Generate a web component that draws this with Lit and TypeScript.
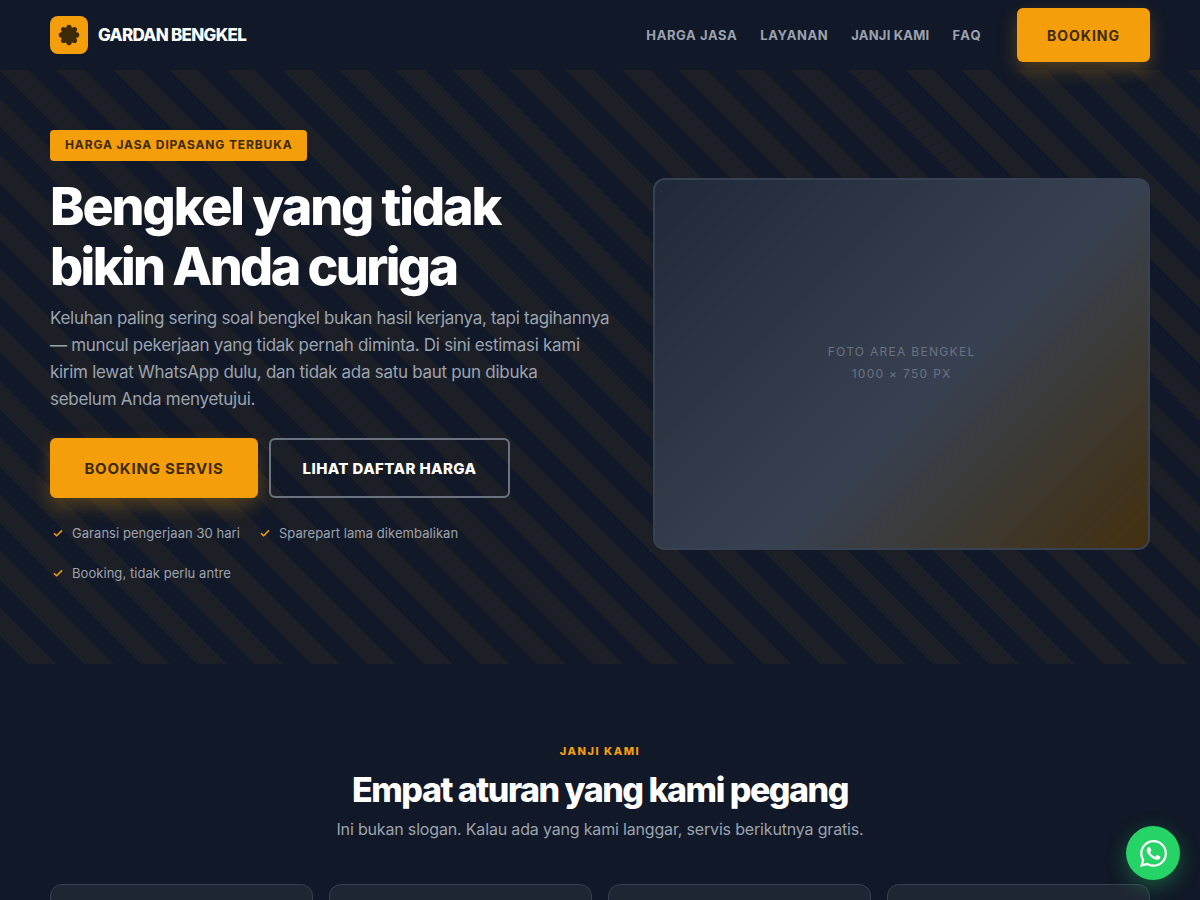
import { LitElement, html, svg, css } from "lit";
import { customElement } from "lit/decorators.js";

@customElement("app-root")
export class AppRoot extends LitElement {
  static styles = css`
    :host { display: block; background: #111827; font-family: "Inter", "Noto Sans", sans-serif; height: 900px; overflow: hidden; position: relative; color: #fff; }
    * { box-sizing: border-box; }
    header { height: 70px; padding: 0 50px; display: flex; align-items: center; justify-content: space-between; background: #111827; position: relative; z-index: 2; }
    .brand { display: flex; align-items: center; gap: 10px; font-weight: 800; font-size: 17px; letter-spacing: -0.7px; }
    .logo { width: 38px; height: 38px; border-radius: 8px; background: #f59e0b; display: flex; align-items: center; justify-content: center; }
    nav { display: flex; align-items: center; gap: 23px; }
    nav a { font-size: 13px; font-weight: 700; letter-spacing: 0.6px; color: #9ca3af; }
    nav a.tight { letter-spacing: 0.2px; }
    nav a.wide { letter-spacing: 1.3px; }
    .btn { display: flex; align-items: center; justify-content: center; border-radius: 6px; font-weight: 700; letter-spacing: 0.8px; }
    .amber { background: #f59e0b; color: #3d2a06; box-shadow: 0 8px 18px rgba(245,158,11,.28); }
    .nav-btn { width: 133px; height: 54px; font-size: 14px; letter-spacing: 1px; margin-left: 12px; }
    .hero { height: 594px; padding: 60px 50px 66px; display: grid; grid-template-columns: 1.15fr 1fr; gap: 32px; align-items: center;
      background: repeating-linear-gradient(45deg, transparent, transparent 20px, rgba(245,158,11,.05) 20px, rgba(245,158,11,.05) 40px); }
    .badge { display: inline-block; background: #f59e0b; color: #3d2a06; font-size: 12px; font-weight: 700; letter-spacing: 0.87px; height: 31px; line-height: 30px; padding: 0 15px; border-radius: 4px; vertical-align: top; }
    h1 { margin: 16px 0 0; font-size: 52px; line-height: 60px; font-weight: 800; }
    h1 span { display: block; }
    .l1 { letter-spacing: -2.1px; }
    .l2 { letter-spacing: -2.6px; }
    .lead { margin: 8px 0 0; font-size: 17px; line-height: 27px; color: #9ca3af; letter-spacing: -0.29px; }
    .cta { display: flex; gap: 11px; margin-top: 25px; }
    .cta .btn { height: 60px; font-size: 15px; }
    .primary { width: 208px; }
    .ghost { width: 241px; border: 2px solid #6b7280; color: #fff; font-weight: 800; letter-spacing: 0.4px !important; }
    .checks { display: flex; flex-wrap: wrap; gap: 16px 17px; margin: 23px 0 13px; max-width: 480px; }
    .check { display: flex; align-items: center; gap: 9px; height: 24px; padding-left: 3px; font-size: 13px; color: #9ca3af; letter-spacing: 0.05px; }
    .photo { aspect-ratio: 4 / 3; border-radius: 12px; border: 2px solid #374151; display: flex; flex-direction: column; align-items: center; justify-content: center; gap: 4px; padding-bottom: 2px;
      background: linear-gradient(135deg, #1f2937 0%, #374151 56%, #43300f 100%); color: #6b7280; font-size: 12px; letter-spacing: 1.3px; line-height: 18px; }
    .section { padding: 80px 50px 0; text-align: center; }
    .eyebrow { font-size: 11px; font-weight: 800; letter-spacing: 1.5px; color: #f59e0b; line-height: 14px; }
    h2 { margin: 10px 0 0; font-size: 34px; line-height: 44px; font-weight: 800; letter-spacing: -1.5px; }
    .sub { margin: 4px 0 0; font-size: 16px; line-height: 26px; color: #9ca3af; letter-spacing: -0.17px; }
    .cards { display: grid; grid-template-columns: repeat(4, 1fr); gap: 16px; margin-top: 42px; }
    .card { height: 120px; background: #1f2633; border: 1px solid #374151; border-radius: 12px; }
    .wa { position: absolute; right: 20px; bottom: 20px; width: 54px; height: 54px; border-radius: 50%; background: #25d366; display: flex; align-items: center; justify-content: center; box-shadow: 0 6px 20px rgba(37,211,102,.35); }
  `;

  render() {
    const lobes = [0, 45, 90, 135, 180, 225, 270, 315].map(
      (a) => svg`<circle cx="${12 + 8.3 * Math.cos((a * Math.PI) / 180)}" cy="${12 + 8.3 * Math.sin((a * Math.PI) / 180)}" r="2.9"/>`
    );
    const gear = html`<svg width="22" height="22" viewBox="0 0 24 24" fill="#3d2a06"><circle cx="12" cy="12" r="8.5"/>${lobes}</svg>`;
    const tick = html`<svg width="10" height="10" viewBox="0 0 10 10" fill="none" stroke="#f59e0b" stroke-width="1.5"><path d="M1 5.2l2.6 2.6L9 2.4"/></svg>`;
    return html`
      <header>
        <div class="brand"><span class="logo">${gear}</span>GARDAN BENGKEL</div>
        <nav>
          <a>HARGA JASA</a><a>LAYANAN</a><a class="tight">JANJI KAMI</a><a class="wide">FAQ</a>
          <div class="btn amber nav-btn">BOOKING</div>
        </nav>
      </header>
      <section class="hero">
        <div>
          <span class="badge">HARGA JASA DIPASANG TERBUKA</span>
          <h1><span class="l1">Bengkel yang tidak</span><span class="l2">bikin Anda curiga</span></h1>
          <p class="lead">Keluhan paling sering soal bengkel bukan hasil kerjanya, tapi tagihannya<br />— muncul pekerjaan yang tidak pernah diminta. Di sini estimasi kami<br />kirim lewat WhatsApp dulu, dan tidak ada satu baut pun dibuka<br />sebelum Anda menyetujui.</p>
          <div class="cta">
            <div class="btn amber primary">BOOKING SERVIS</div>
            <div class="btn ghost">LIHAT DAFTAR HARGA</div>
          </div>
          <div class="checks">
            <div class="check">${tick}Garansi pengerjaan 30 hari</div>
            <div class="check">${tick}Sparepart lama dikembalikan</div>
            <div class="check">${tick}Booking, tidak perlu antre</div>
          </div>
        </div>
        <div class="photo"><span>FOTO AREA BENGKEL</span><span>1000 × 750 PX</span></div>
      </section>
      <section class="section">
        <div class="eyebrow">JANJI KAMI</div>
        <h2>Empat aturan yang kami pegang</h2>
        <p class="sub">Ini bukan slogan. Kalau ada yang kami langgar, servis berikutnya gratis.</p>
        <div class="cards"><div class="card"></div><div class="card"></div><div class="card"></div><div class="card"></div></div>
      </section>
      <div class="wa"><svg width="27" height="27" viewBox="0 0 24 24" fill="#fff"><path d="M17.472 14.382c-.297-.149-1.758-.867-2.03-.967-.273-.099-.471-.148-.67.15-.197.297-.767.966-.94 1.164-.173.199-.347.223-.644.075-.297-.15-1.255-.463-2.39-1.475-.883-.788-1.48-1.761-1.653-2.059-.173-.297-.018-.458.13-.606.134-.133.298-.347.446-.52.149-.174.198-.298.298-.497.099-.198.05-.371-.025-.52-.075-.149-.669-1.612-.916-2.207-.242-.579-.487-.5-.669-.51-.173-.008-.371-.01-.57-.01-.198 0-.52.074-.792.372-.272.297-1.04 1.016-1.04 2.479 0 1.462 1.065 2.875 1.213 3.074.149.198 2.096 3.2 5.077 4.487.709.306 1.262.489 1.694.625.712.227 1.36.195 1.871.118.571-.085 1.758-.719 2.006-1.413.248-.694.248-1.289.173-1.413-.074-.124-.272-.198-.57-.347m-5.421 7.403h-.004a9.87 9.87 0 01-5.031-1.378l-.361-.214-3.741.982.998-3.648-.235-.374a9.86 9.86 0 01-1.51-5.26c.001-5.45 4.436-9.884 9.888-9.884 2.64 0 5.122 1.03 6.988 2.898a9.825 9.825 0 012.893 6.994c-.003 5.45-4.437 9.884-9.885 9.884m8.413-18.297A11.815 11.815 0 0012.05 0C5.495 0 .16 5.335.157 11.892c0 2.096.547 4.142 1.588 5.945L.057 24l6.305-1.654a11.882 11.882 0 005.683 1.448h.005c6.554 0 11.89-5.335 11.893-11.893a11.821 11.821 0 00-3.48-8.413z"/></svg></div>
    `;
  }
}
